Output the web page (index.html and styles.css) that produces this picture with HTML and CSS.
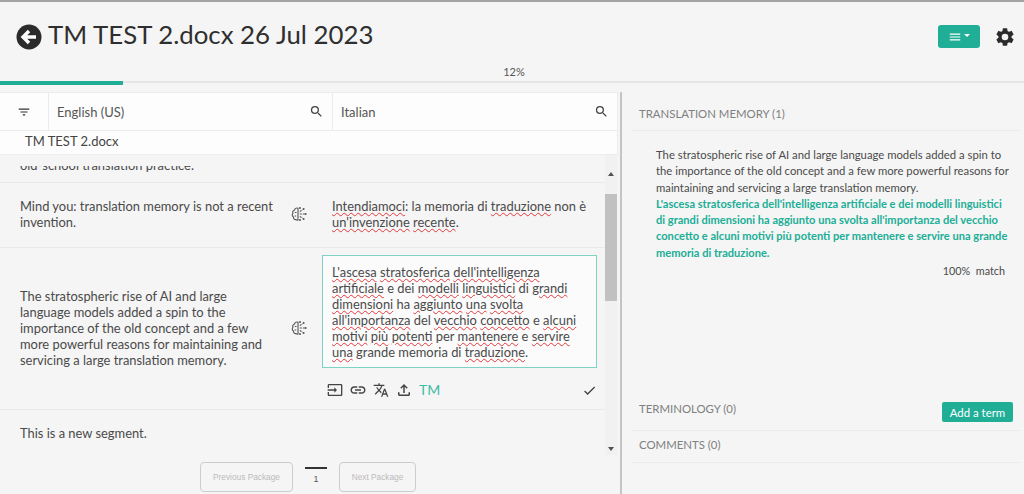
FILE: index.html
```html
<!DOCTYPE html>
<html lang="en">
<head>
<meta charset="utf-8">
<title>TM TEST 2.docx</title>
<link rel="stylesheet" href="styles.css">
</head>
<body>
<header class="header">
  <div class="title-wrap">
    <svg class="back" viewBox="0 0 26 26"><circle cx="13" cy="13" r="12.5" fill="#2b2b2b"/><path d="M20 13H7.5M13 7l-6 6 6 6" fill="none" stroke="#fff" stroke-width="3.4"/></svg>
    <h1 class="title">TM TEST 2.docx 26 Jul 2023</h1>
  </div>
  <div class="header-actions">
    <button class="menu-btn"><svg class="menu-icon" viewBox="0 0 24 24"><path d="M3 18h18v-2H3v2zm0-5h18v-2H3v2zm0-7v2h18V6H3z"/></svg><span class="caret"></span></button>
    <svg class="gear" viewBox="0 0 24 24"><path d="M19.14 12.94c.04-.3.06-.61.06-.94 0-.32-.02-.64-.07-.94l2.03-1.58a.49.49 0 0 0 .12-.61l-1.92-3.32a.49.49 0 0 0-.59-.22l-2.39.96c-.5-.38-1.03-.7-1.62-.94l-.36-2.54a.48.48 0 0 0-.48-.41h-3.84c-.24 0-.43.17-.47.41l-.36 2.54c-.59.24-1.13.57-1.62.94l-2.39-.96c-.22-.08-.47 0-.59.22L2.74 8.87c-.12.21-.08.47.12.61l2.03 1.58c-.05.3-.09.63-.09.94s.02.64.07.94l-2.03 1.58a.49.49 0 0 0-.12.61l1.92 3.32c.12.22.37.29.59.22l2.39-.96c.5.38 1.03.7 1.62.94l.36 2.54c.05.24.24.41.48.41h3.84c.24 0 .44-.17.47-.41l.36-2.54c.59-.24 1.13-.56 1.62-.94l2.39.96c.22.08.47 0 .59-.22l1.92-3.32c.12-.22.07-.47-.12-.61l-2.01-1.58zM12 15.6A3.6 3.6 0 1 1 12 8.4a3.6 3.6 0 0 1 0 7.2z"/></svg>
  </div>
</header>
<div class="percent">12%</div>
<div class="progress"><div class="progress-fill"></div></div>

<main class="workspace">
  <section class="editor">
    <div class="toolbar">
      <div class="tool-filter"><svg class="ico-filter" viewBox="0 0 24 24"><path d="M10 18h4v-2h-4v2zM3 6v2h18V6H3zm3 7h12v-2H6v2z"/></svg></div>
      <div class="tool-lang"><span>English (US)</span><svg class="ico-search" viewBox="0 0 24 24"><path d="M15.5 14h-.79l-.28-.27A6.47 6.47 0 0 0 16 9.5 6.5 6.5 0 1 0 9.5 16c1.61 0 3.09-.59 4.23-1.57l.27.28v.79l5 4.99L20.49 19l-4.99-5zm-6 0C7.01 14 5 11.99 5 9.5S7.01 5 9.5 5 14 7.01 14 9.5 11.99 14 9.5 14z"/></svg></div>
      <div class="tool-lang tool-lang-last"><span>Italian</span><svg class="ico-search" viewBox="0 0 24 24"><path d="M15.5 14h-.79l-.28-.27A6.47 6.47 0 0 0 16 9.5 6.5 6.5 0 1 0 9.5 16c1.61 0 3.09-.59 4.23-1.57l.27.28v.79l5 4.99L20.49 19l-4.99-5zm-6 0C7.01 14 5 11.99 5 9.5S7.01 5 9.5 5 14 7.01 14 9.5 11.99 14 9.5 14z"/></svg></div>
    </div>
    <div class="file-row">TM TEST 2.docx</div>
    <div class="list-wrap">
      <div class="segments">
        <div class="seg-clipped"><div class="clip-window"><span>old-school translation practice.</span></div></div>
        <div class="seg seg-a">
          <p class="src">Mind you: translation memory is not a recent invention.</p>
          <svg class="brain" viewBox="0 0 16 16"><g fill="none" stroke="#555" stroke-width="1.1"><path d="M7 2.2C5 1.6 3.8 2.6 3.6 4 2 4.5 1.3 6 1.9 7.3.9 8.5 1.1 10.4 2.5 11c-.2 1.6 1.2 3 2.6 2.6.6.5 1.3.6 1.9.3z"/><path d="M3.8 6.5h1.7M3.6 10h1.6"/><path d="M8.8 8h5M8.8 5.5l3-1.7M8.8 10.5l3 1.7" stroke-dasharray="2 1"/></g><g fill="#555"><circle cx="9" cy="2" r="1"/><circle cx="12.6" cy="3" r="1"/><circle cx="9" cy="14" r="1"/><circle cx="12.6" cy="13" r="1"/><circle cx="14.6" cy="8" r="1"/></g></svg>
          <p class="tgt"><span class="sp">Intendiamoci</span>: la memoria di <span class="sp">traduzione</span> non è <span class="sp">un'invenzione</span> <span class="sp">recente</span>.</p>
        </div>
        <div class="seg seg-b">
          <p class="src">The stratospheric rise of AI and large language models added a spin to the importance of the old concept and a few more powerful reasons for maintaining and servicing a large translation memory.</p>
          <svg class="brain" viewBox="0 0 16 16"><g fill="none" stroke="#555" stroke-width="1.1"><path d="M7 2.2C5 1.6 3.8 2.6 3.6 4 2 4.5 1.3 6 1.9 7.3.9 8.5 1.1 10.4 2.5 11c-.2 1.6 1.2 3 2.6 2.6.6.5 1.3.6 1.9.3z"/><path d="M3.8 6.5h1.7M3.6 10h1.6"/><path d="M8.8 8h5M8.8 5.5l3-1.7M8.8 10.5l3 1.7" stroke-dasharray="2 1"/></g><g fill="#555"><circle cx="9" cy="2" r="1"/><circle cx="12.6" cy="3" r="1"/><circle cx="9" cy="14" r="1"/><circle cx="12.6" cy="13" r="1"/><circle cx="14.6" cy="8" r="1"/></g></svg>
          <div class="tgt-edit">
            <p class="edit-box"><span class="sp">L'ascesa</span> <span class="sp">stratosferica</span> <span class="sp">dell'intelligenza</span> <span class="sp">artificiale</span> e dei <span class="sp">modelli</span> <span class="sp">linguistici</span> di <span class="sp">grandi</span> <span class="sp">dimensioni</span> ha <span class="sp">aggiunto</span> <span class="sp">una</span> <span class="sp">svolta</span> <span class="sp">all'importanza</span> del <span class="sp">vecchio</span> <span class="sp">concetto</span> e <span class="sp">alcuni</span> <span class="sp">motivi</span> <span class="sp">più</span> <span class="sp">potenti</span> per <span class="sp">mantenere</span> e <span class="sp">servire</span> <span class="sp">una</span> grande memoria di <span class="sp">traduzione</span>.</p>
            <div class="edit-tools">
              <svg class="ico" viewBox="0 0 24 24"><path d="M21 3.01H3c-1.1 0-2 .9-2 2V9h2V4.99h18v14.03H3V15H1v4.01c0 1.1.9 1.98 2 1.98h18c1.1 0 2-.88 2-1.98v-14c0-1.11-.9-2-2-2zM11 16l4-4-4-4v3H1v2h10v3z"/></svg>
              <svg class="ico ico-lg" viewBox="0 0 24 24"><path d="M3.9 12c0-1.71 1.39-3.1 3.1-3.1h4V7H7c-2.76 0-5 2.24-5 5s2.24 5 5 5h4v-1.9H7c-1.71 0-3.1-1.39-3.1-3.1zM8 13h8v-2H8v2zm9-6h-4v1.9h4c1.71 0 3.1 1.39 3.1 3.1s-1.39 3.1-3.1 3.1h-4V17h4c2.76 0 5-2.24 5-5s-2.24-5-5-5z"/></svg>
              <svg class="ico" viewBox="0 0 24 24"><path d="M12.87 15.07l-2.54-2.51.03-.03c1.74-1.94 2.98-4.17 3.71-6.53H17V4h-7V2H8v2H1v1.99h11.17C11.5 7.92 10.44 9.75 9 11.35 8.07 10.32 7.3 9.19 6.69 8h-2c.73 1.63 1.73 3.17 2.98 4.56l-5.09 5.02L4 19l5-5 3.11 3.11.76-2.04zM18.5 10h-2L12 22h2l1.12-3h4.75L21 22h2l-4.5-12zm-2.62 7l1.62-4.33L19.12 17h-3.24z"/></svg>
              <svg class="ico ico-lg" viewBox="0 0 24 24"><path d="M18 15v3H6v-3H4v3c0 1.1.9 2 2 2h12c1.1 0 2-.9 2-2v-3h-2zM7 9l1.41 1.41L11 7.83V16h2V7.83l2.59 2.58L17 9l-5-5-5 5z"/></svg>
              <span class="tm">TM</span>
              <svg class="ico ico-check" viewBox="0 0 24 24"><path d="M9 16.17L4.83 12l-1.42 1.41L9 19 21 7l-1.41-1.41z"/></svg>
            </div>
          </div>
        </div>
        <div class="seg seg-c"><p class="src">This is a new segment.</p></div>
      </div>
      <div class="scrollbar">
        <span class="arrow-up"></span>
        <div class="thumb"></div>
        <span class="arrow-down"></span>
      </div>
    </div>
    <nav class="pager">
      <button class="page-btn page-prev">Previous Package</button>
      <span class="page-num">1</span>
      <button class="page-btn page-next">Next Package</button>
    </nav>
  </section>

  <aside class="side">
    <h2 class="side-head side-head-tm">TRANSLATION MEMORY (1)</h2>
    <div class="tm-body">
      <p class="tm-src">The stratospheric rise of AI and large language models added a spin to the importance of the old concept and a few more powerful reasons for maintaining and servicing a large translation memory.</p>
      <p class="tm-tgt">L'ascesa stratosferica dell'intelligenza artificiale e dei modelli linguistici di grandi dimensioni ha aggiunto una svolta all'importanza del vecchio concetto e alcuni motivi più potenti per mantenere e servire una grande memoria di traduzione.</p>
      <p class="tm-match">100% &nbsp;match</p>
    </div>
    <div class="side-head side-head-term"><h2 class="side-label">TERMINOLOGY (0)</h2><button class="add-term">Add a term</button></div>
    <h2 class="side-head side-head-com">COMMENTS (0)</h2>
  </aside>
</main>
</body>
</html>
```
FILE: styles.css
```css
* { box-sizing: border-box; }
html, body { margin: 0; height: 494px; overflow: hidden; }
body { background: #f5f5f5; font-family: "Lato", sans-serif; color: #444; display: flex; flex-direction: column; border-top: 2px solid #a3a3a3; }
p, h1, h2 { margin: 0; font-weight: 400; }
button { font-family: inherit; }

.header { height: 63px; padding: 0 8px 0 16px; display: flex; align-items: flex-start; justify-content: space-between; flex: none; }
.title-wrap { display: flex; align-items: center; gap: 6px; padding-top: 15px; }
.back { width: 26px; height: 26px; margin-top: 5px; }
.title { font-size: 25.8px; line-height: 34px; color: #2f2f2f; }
.header-actions { display: flex; align-items: center; gap: 14px; padding-top: 23px; }
.menu-btn { width: 42px; height: 23px; background: #20ae97; border: 0; border-radius: 3px; padding: 0 0 0 10px; display: flex; align-items: center; gap: 2px; }
.menu-icon { width: 14px; height: 14px; fill: #fff; }
.caret { width: 0; height: 0; border-left: 3px solid transparent; border-right: 3px solid transparent; border-top: 3px solid #fff; margin-top: -3px; }
.gear { width: 22px; height: 22px; fill: #2b2b2b; }

.percent { height: 16px; font-size: 11px; line-height: 14px; text-align: center; color: #555; flex: none; padding-left: 4px; }
.progress { height: 4px; background: linear-gradient(#e6e6e6 50%, transparent 50%); flex: none; }
.progress-fill { width: 123px; height: 4px; background: #20ae97; }

.workspace { flex: 1; min-height: 0; display: flex; padding-top: 7px; }
.editor { width: 618px; flex: none; display: flex; flex-direction: column; min-height: 0; }
.toolbar { height: 39px; display: flex; background: #fdfdfd; border-top: 1px solid #ececec; border-bottom: 1px solid #ececec; flex: none; font-size: 13px; color: #555; }
.tool-filter { width: 49px; border-right: 1px solid #ececec; display: flex; align-items: center; padding-left: 17px; }
.ico-filter { width: 14px; height: 14px; fill: #333; }
.tool-lang { width: 284px; padding: 0 8px 0 8px; border-right: 1px solid #ececec; display: flex; align-items: center; justify-content: space-between; }
.tool-lang-last { flex: 1; border-right: 1px solid #ececec; padding-left: 8px; }
.ico-search { width: 15px; height: 15px; fill: #444; }
.file-row { height: 24px; background: #fdfdfd; border-bottom: 1px solid #ececec; border-right: 1px solid #ececec; font-size: 13px; line-height: 20px; padding-left: 25px; color: #444; flex: none; }

.list-wrap { height: 300px; display: flex; flex: none; }
.segments { width: 605px; flex: none; display: flex; flex-direction: column; font-size: 12.9px; line-height: 16px; color: #4a4a4a; overflow: hidden; }
.seg-clipped { height: 28px; flex: none; border-bottom: 1px solid #e9e9e9; padding: 11px 0 0 20px; }
.clip-window { height: 6px; overflow: hidden; }
.clip-window span { display: block; margin-top: -9px; }
.seg { display: flex; align-items: center; border-bottom: 1px solid #e9e9e9; flex: none; padding-left: 20px; }
.seg-a { height: 65px; padding-bottom: 2px; }
.seg-b { height: 162px; align-items: flex-start; }
.seg-c { height: 45px; border-bottom: 0; }
.src { width: 258px; flex: none; }
.seg-b .src { margin-top: 40px; }
.brain { width: 16px; height: 16px; flex: none; margin-left: 13px; }
.seg-b .brain { margin-top: 72px; }
.tgt { margin-left: 25px; width: 262px; }
.sp { text-decoration: underline wavy #e5383b 1px; text-underline-offset: 1px; }
.tgt-edit { margin-left: 15px; width: 275px; padding-top: 7px; }
.edit-box { height: 113px; border: 1px solid #7fd3c5; background: #fbfbfb; padding: 8px 9px; }
.edit-tools { display: flex; align-items: center; gap: 7px; padding: 14px 0 0 5px; }
.ico { width: 16px; height: 16px; fill: #444; flex: none; }
.ico-lg { width: 18px; height: 18px; margin: -1px; }
.tm { color: #3dbba6; font-size: 14px; line-height: 16px; }
.ico-check { margin-left: auto; width: 15px; height: 15px; }

.scrollbar { width: 12px; background: #f1f1f1; display: flex; flex-direction: column; align-items: center; }
.arrow-up { width: 0; height: 0; border-left: 3px solid transparent; border-right: 3px solid transparent; border-bottom: 4px solid #505050; margin-top: 17px; flex: none; }
.thumb { width: 100%; height: 107px; background: #c1c1c1; margin-top: 18px; flex: none; }
.arrow-down { width: 0; height: 0; border-left: 3px solid transparent; border-right: 3px solid transparent; border-top: 4px solid #505050; margin-top: auto; margin-bottom: 4px; flex: none; }

.pager { display: flex; align-items: flex-start; padding: 7px 0 0 200px; flex: none; }
.page-btn { height: 30px; background: transparent; border: 1px solid #ccc; border-radius: 4px; color: #bbb; font-family: "Liberation Sans", sans-serif; font-size: 8.3px; padding: 0; }
.page-prev { width: 93px; }
.page-next { width: 77px; }
.page-num { width: 22px; margin: 5px 12px 0; border-top: 2px solid #333; font-family: "Liberation Sans", sans-serif; font-size: 9px; line-height: 16px; padding-top: 2px; text-align: center; color: #555; }

.side { flex: 1; min-width: 0; margin-left: 2px; border-left: 2px solid #c4c4c4; padding-left: 9px; padding-right: 3px; display: flex; flex-direction: column; }
.side-head { font-size: 11.4px; line-height: 16px; color: #808080; border-bottom: 1px solid #ebebeb; padding-left: 8px; }
.side-head-tm { height: 39px; padding-top: 14px; flex: none; }
.tm-body { height: 270px; padding: 16px 9px 0 25px; font-size: 11.3px; line-height: 16.3px; color: #4a4a4a; flex: none; }
.tm-tgt { color: #20ae97; font-weight: 700; font-size: 11.1px; }
.tm-match { text-align: right; margin: 2px 7px 0 0; font-size: 10.8px; }
.side-head-term { height: 30px; display: flex; justify-content: space-between; align-items: flex-start; padding: 0 8px; flex: none; }
.side-label { font-size: 11.4px; line-height: 16px; }
.add-term { width: 71px; height: 20px; background: #20ae97; color: #fff; border: 0; border-radius: 2px; font-size: 11.4px; padding: 0; margin-top: 1px; }
.side-head-com { height: 32px; padding-top: 6px; flex: none; }
```
